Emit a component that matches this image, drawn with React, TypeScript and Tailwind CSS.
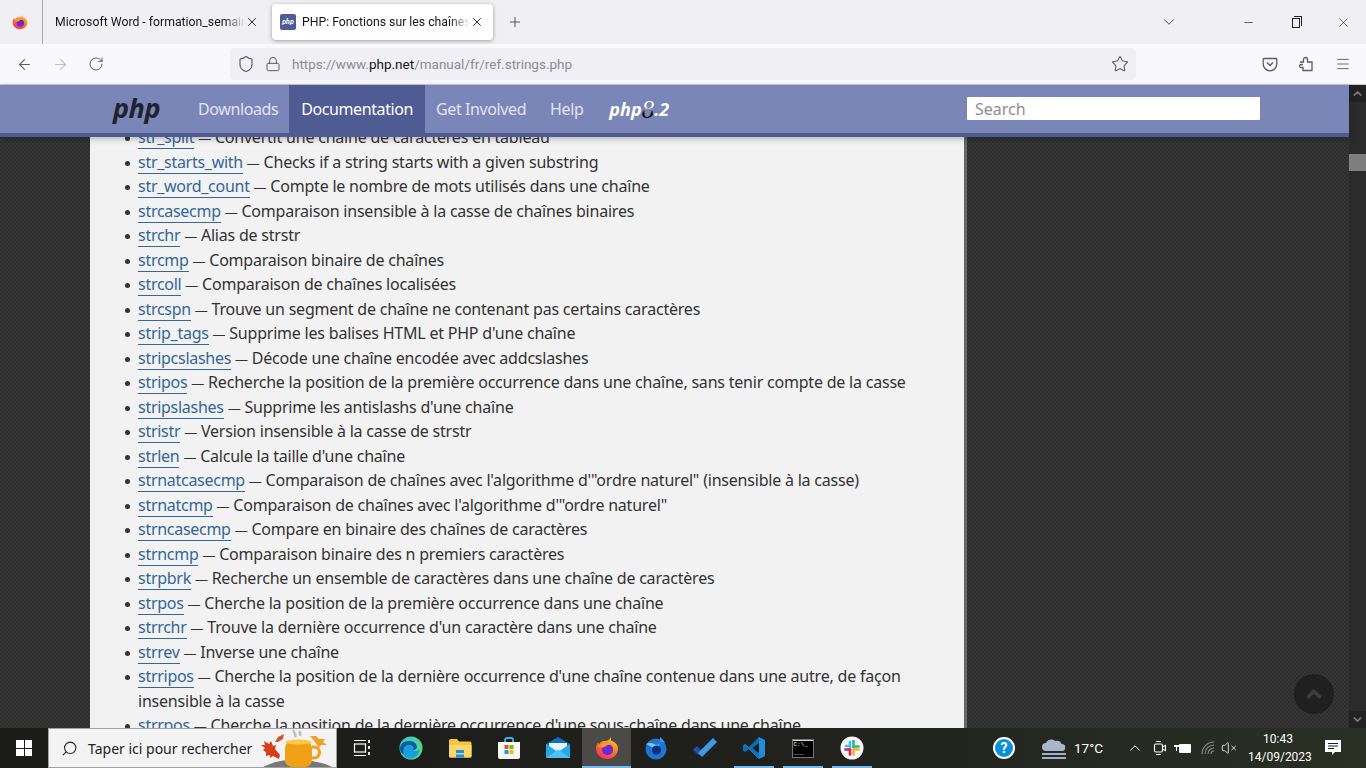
import { ArrowLeft, ArrowRight, RotateCw, Shield, Lock, Star, Menu, X, Plus, ChevronDown, ChevronUp, Minus, Search, VolumeX } from 'lucide-react';

const items: { name: string; text: string }[] = [
  { name: 'str_split', text: 'Convertit une chaîne de caractères en tableau' },
  { name: 'str_starts_with', text: 'Checks if a string starts with a given substring' },
  { name: 'str_word_count', text: 'Compte le nombre de mots utilisés dans une chaîne' },
  { name: 'strcasecmp', text: 'Comparaison insensible à la casse de chaînes binaires' },
  { name: 'strchr', text: 'Alias de strstr' },
  { name: 'strcmp', text: 'Comparaison binaire de chaînes' },
  { name: 'strcoll', text: 'Comparaison de chaînes localisées' },
  { name: 'strcspn', text: 'Trouve un segment de chaîne ne contenant pas certains caractères' },
  { name: 'strip_tags', text: "Supprime les balises HTML et PHP d'une chaîne" },
  { name: 'stripcslashes', text: 'Décode une chaîne encodée avec addcslashes' },
  { name: 'stripos', text: 'Recherche la position de la première occurrence dans une chaîne, sans tenir compte de la casse' },
  { name: 'stripslashes', text: "Supprime les antislashs d'une chaîne" },
  { name: 'stristr', text: 'Version insensible à la casse de strstr' },
  { name: 'strlen', text: "Calcule la taille d'une chaîne" },
  { name: 'strnatcasecmp', text: `Comparaison de chaînes avec l'algorithme d'"ordre naturel" (insensible à la casse)` },
  { name: 'strnatcmp', text: `Comparaison de chaînes avec l'algorithme d'"ordre naturel"` },
  { name: 'strncasecmp', text: 'Compare en binaire des chaînes de caractères' },
  { name: 'strncmp', text: 'Comparaison binaire des n premiers caractères' },
  { name: 'strpbrk', text: 'Recherche un ensemble de caractères dans une chaîne de caractères' },
  { name: 'strpos', text: 'Cherche la position de la première occurrence dans une chaîne' },
  { name: 'strrchr', text: "Trouve la dernière occurrence d'un caractère dans une chaîne" },
  { name: 'strrev', text: 'Inverse une chaîne' },
  { name: 'strripos', text: "Cherche la position de la dernière occurrence d'une chaîne contenue dans une autre, de façon insensible à la casse" },
  { name: 'strrpos', text: "Cherche la position de la dernière occurrence d'une sous-chaîne dans une chaîne" },
];

function FirefoxIcon({ id, size }: { id: string; size: number }) {
  return (
    <svg width={size} height={size} viewBox="0 0 24 24">
      <defs>
        <linearGradient id={id} x1="0.8" y1="0" x2="0.2" y2="1">
          <stop offset="0" stopColor="#ffd23c" />
          <stop offset="0.45" stopColor="#ff7a1f" />
          <stop offset="1" stopColor="#f5276b" />
        </linearGradient>
      </defs>
      <path d="M15.5 1c1 2 .6 3 .2 3.6C19.8 6 23 8.6 23 12.5 23 18.5 18 23 12 23 6 23 1 18.400 1 12.500 1 10 1.700 8 3 6.500c.3.900.7 1.400 1.300 1.800C5.200 6 7 5 8.500 5.100 10.500 5 15.500 4.500 15.500 1z" fill={`url(#${id})`} />
      <circle cx="12.500" cy="13.500" r="5.600" fill="#6a2bd0" />
      <path d="M3 11c2-3 6-5 9.500-4.500 3 .4 5 2 6 3.500-2-1-4-1.500-6-1-1 .3-1 1-2 1.500L8 11.500z" fill="#ff9a2a" />
    </svg>
  );
}

function ThunderbirdIcon() {
  return (
    <svg width="24" height="24" viewBox="0 0 24 24">
      <circle cx="12" cy="13" r="10.500" fill="#1b76d0" />
      <path d="M16 1c2 2 4 3 5 6-2-1-4-1-5-1z" fill="#2f9cf0" />
      <path d="M2 8c3-1.500 6-1 8 0 3 1.500 5 1 6-1-.5 3-3 5-6 4.500-2.500-.4-5-2-8-3.500z" fill="#7cc8f8" />
      <circle cx="12.500" cy="14" r="4.500" fill="#172c7a" />
    </svg>
  );
}

function EdgeIcon() {
  return (
    <svg width="24" height="24" viewBox="0 0 24 24">
      <defs>
        <linearGradient id="edgeA" x1="0" y1="0" x2="1" y2="1">
          <stop offset="0" stopColor="#37c6d0" />
          <stop offset="1" stopColor="#5fdc6a" />
        </linearGradient>
      </defs>
      <circle cx="12" cy="12" r="11.500" fill="url(#edgeA)" />
      <path d="M1 13C1 7 6 5 10 5c5 0 8 3 8 6 0 2-2 3-4 3-1 0 1-1 0-3-1-2-4-3-7-1-3 2-3 6-1 9-3-1-5-3-5-6z" fill="#0c59a4" />
      <path d="M7 10c3-2 6-1 7 1 1 2-1 3 0 3.500 2 1 5 0 7-1-1 5-5 9-10 9-3 0-6-2-6.500-5-.3-3 .5-6 2.500-7.500z" fill="#1b9de2" />
    </svg>
  );
}

function ExplorerIcon() {
  return (
    <svg width="24" height="22" viewBox="0 0 24 22">
      <path d="M1 3.500A1.500 1.500 0 0 1 2.500 2H9l2 2.500h11A1.500 1.500 0 0 1 23.500 6v13A1.500 1.500 0 0 1 22 20.500H2.500A1.500 1.500 0 0 1 1 19z" fill="#f6c343" />
      <path d="M1 8h22.500v11a1.500 1.500 0 0 1-1.500 1.500H2.500A1.500 1.500 0 0 1 1 19z" fill="#fbd768" />
      <rect x="8" y="13" width="8" height="7.500" fill="#2d8bd6" />
      <rect x="8" y="16" width="8" height="1.500" fill="#b9dcf5" />
    </svg>
  );
}

function StoreIcon() {
  return (
    <svg width="24" height="24" viewBox="0 0 24 24">
      <path d="M8 6V4a2 2 0 0 1 2-2h4a2 2 0 0 1 2 2v2" fill="none" stroke="#3cb4ea" strokeWidth="1.800" />
      <path d="M1 6h22v15a2 2 0 0 1-2 2H3a2 2 0 0 1-2-2z" fill="#f6f6f6" />
      <rect x="7.500" y="9" width="4" height="4" fill="#f25022" />
      <rect x="12.500" y="9" width="4" height="4" fill="#7fba00" />
      <rect x="7.500" y="14" width="4" height="4" fill="#00a4ef" />
      <rect x="12.500" y="14" width="4" height="4" fill="#ffb900" />
    </svg>
  );
}

function MailIcon() {
  return (
    <svg width="24" height="24" viewBox="0 0 24 24">
      <path d="M0 8 12 1l12 7v13H0z" fill="#0f6fbf" />
      <path d="M3 7h18v9H3z" fill="#e9f4fb" />
      <path d="M0 8l12 8 12-8v14H0z" fill="#27a8ea" />
      <path d="M0 22 12 13.500 24 22z" fill="#4cc2f3" />
    </svg>
  );
}

function TodoIcon() {
  return (
    <svg width="26" height="22" viewBox="0 0 26 22">
      <path d="M1 13l4-4 5 5-4 4z" fill="#1d50a8" />
      <path d="M6 18 21 3l4 4L10 22z" transform="translate(0 -2)" fill="#3a9bec" />
    </svg>
  );
}

function VsCodeIcon() {
  return (
    <svg width="24" height="24" viewBox="0 0 24 24">
      <path d="M17 1l6 3v16l-6 3-10-10z" fill="#1f8ed8" />
      <path d="M17 1v22L7 13l-4 3-2-1.500V9.500L3 8l4 3z" fill="#0b6db4" />
      <path d="M17 7v10l-6.500-5z" fill="#1c1c1a" />
      <path d="M1 9.500 3 8l14 11v4l-10-10z" fill="#0f78c2" />
    </svg>
  );
}

function TerminalIcon() {
  return (
    <div className="w-[22px] h-[19px] bg-black border border-[#777] flex flex-col">
      <div className="h-[2px] bg-[#d8d8d8]" />
      <div className="pl-[1px] text-white font-['Liberation_Mono',monospace] text-[6px] leading-[8px]">C:\_ ___</div>
    </div>
  );
}

function SlackIcon() {
  return (
    <svg width="24" height="24" viewBox="0 0 24 24">
      <circle cx="12" cy="12" r="11.500" fill="#f7f7f7" />
      <g strokeWidth="2.600" strokeLinecap="round" fill="none">
        <path d="M10 6v5" stroke="#36c5f0" />
        <path d="M6 10h2" stroke="#36c5f0" />
        <path d="M13.500 5v6" stroke="#2eb67d" />
        <path d="M13.500 10.500h5" stroke="#2eb67d" />
        <path d="M13.500 13.500v5" stroke="#ecb22e" />
        <path d="M14 13.500h4.500" stroke="#ecb22e" />
        <path d="M10 13.500v5" stroke="#e01e5a" />
        <path d="M5.500 13.500H10" stroke="#e01e5a" />
      </g>
    </svg>
  );
}

function TaskIcon({ children, mark, active }: { children: React.ReactNode; mark?: boolean; active?: boolean }) {
  return (
    <div className={`relative w-[49px] h-full flex items-center justify-center ${active ? 'bg-[#4b4a46]' : ''}`}>
      {children}
      {mark && <div className={`absolute bottom-0 h-[2px] bg-[#76b9ed] ${active ? 'left-0 right-0' : 'left-[5px] right-[4px]'}`} />}
    </div>
  );
}

function MugArt() {
  return (
    <svg width="76" height="40" viewBox="0 0 76 40" className="absolute right-0 top-0">
      <path d="M0 40c10-7 26-10 40-9 14 .6 26 3 36 9z" fill="#77767a" />
      <path d="M1 16l4 0-1-4 5 3 2-3 2 5 3-1-1 4 5 6-1 4-6-3-3 2 0-3-4 1 0-4-3-2 2-2z" fill="#d63d18" />
      <path d="M15 13l3-5 6-3-1 5-5 3z" fill="#c9592a" />
      <path d="M50 7l6 0 3 3 6 0-2 3 4 3-6 0-2 3-4-6z" fill="#eea21f" />
      <rect x="25" y="12" width="27" height="26" rx="7" fill="#f0a015" />
      <ellipse cx="38.500" cy="13" rx="13" ry="2.500" fill="#ffc848" />
      <path d="M52 18h2a5 5 0 0 1 0 11h-3" fill="none" stroke="#f0a015" strokeWidth="3" />
      <path d="M34 1c-2 3 3 3 1 7M40 2c-1 2 1 3 0 5" fill="none" stroke="#bdbdbd" strokeWidth="2.500" />
    </svg>
  );
}

export default function App() {
  return (
    <div className="w-[1366px] h-[768px] overflow-hidden flex flex-col bg-[#333] font-['Roboto',sans-serif]">
      {/* Tab bar */}
      <div className="h-[44px] flex items-center bg-[#f0f0f4] text-[#15141a] text-[12.25px]">
        <div className="w-[43px] h-full flex items-center justify-center border-r border-[#a8a8ac] pr-[3px]">
          <FirefoxIcon id="ffTab" size={16} />
        </div>
        <div className="w-[229px] h-full flex items-center pl-[12px] pr-[13px]">
          <span className="flex-1 mt-[1px] overflow-hidden whitespace-nowrap [mask-image:linear-gradient(to_left,transparent,black_20px)]">Microsoft Word - formation_semaine</span>
          <X size={14} strokeWidth={1.5} />
        </div>
        <div className="w-[221px] h-[36px] bg-white rounded-[4px] shadow-[0_1px_4px_rgba(0,0,0,0.35)] flex items-center pl-[8px] pr-[9px]">
          <div className="w-[16px] h-[16px] rounded-[2px] bg-[#4f5b93] text-white flex items-center justify-center italic font-bold text-[7px] mr-[6px]">php</div>
          <span className="flex-1 mt-[1px] overflow-hidden whitespace-nowrap [mask-image:linear-gradient(to_left,transparent,black_20px)]">PHP: Fonctions sur les chaînes de caractères</span>
          <X size={14} strokeWidth={1.5} />
        </div>
        <Plus size={16} strokeWidth={1.3} className="ml-[14px] text-[#444]" />
        <div className="flex-1" />
        <ChevronDown size={18} strokeWidth={1.2} className="text-[#444] mr-[64px]" />
        <Minus size={13} strokeWidth={1.3} className="text-[#222] mr-[37px]" />
        <div className="relative w-[10px] h-[12px] mr-[34px]">
          <div className="absolute left-0 bottom-0 w-[8px] h-[10px] border border-[#222] bg-[#f0f0f4]" />
          <div className="absolute right-0 top-0 w-[8px] h-[10px] border-t border-r border-[#222]" />
        </div>
        <X size={15} strokeWidth={1} className="text-[#222] mr-[15px]" />
      </div>

      {/* Toolbar */}
      <div className="h-[41px] bg-[#f9f9fb] border-b border-[#ccc] flex items-center text-[#5b5b66]">
        <ArrowLeft size={17} strokeWidth={1.5} className="ml-[16px]" />
        <ArrowRight size={17} strokeWidth={1.5} className="ml-[19px] text-[#bdbdc2]" />
        <RotateCw size={16} strokeWidth={1.5} className="ml-[19px]" />
        <div className="ml-[126px] w-[906px] h-[32px] rounded-[4px] bg-[#f0f0f4] flex items-center pl-[7px] pr-[7px]">
          <Shield size={18} strokeWidth={1.5} />
          <Lock size={16} strokeWidth={1.5} className="ml-[10px]" />
          <span className="ml-[11px] mt-[1px] text-[13.5px] text-[#8b8b92] whitespace-nowrap">
            https://www.<span className="text-[#15141a]">php.net</span>/manual/fr/ref.strings.php
          </span>
          <div className="flex-1" />
          <Star size={18} strokeWidth={1.4} />
        </div>
        <svg width="16" height="16" viewBox="0 0 16 16" className="ml-[126px]" fill="none" stroke="currentColor" strokeWidth="1.300">
          <path d="M2 2.500h12a.8.8 0 0 1 .8.8V8a6.800 6.800 0 0 1-13.600 0V3.300a.8.8 0 0 1 .8-.8z" />
          <path d="M5 6.500l3 3 3-3" />
        </svg>
        <svg width="16" height="16" viewBox="0 0 16 16" className="ml-[20px]" fill="none" stroke="currentColor" strokeWidth="1.300">
          <path d="M2 6h3.500V3.500a2 2 0 0 1 4 0V6H14v8.500H5V11.500H3a1.500 1.500 0 0 1 0-3h2" />
        </svg>
        <Menu size={16} strokeWidth={1.4} className="ml-[21px]" />
      </div>

      {/* Browser viewport */}
      <div className="h-[643px] flex">
        <div className="relative w-[1349px] flex flex-col">
          <nav className="relative z-10 h-[52px] bg-[#7a86b8] border-b-[4px] border-[#4f5b93] shadow-[0_2px_6px_rgba(0,0,0,0.25)] flex font-['Noto_Sans',sans-serif] text-[16px] tracking-[-0.4px] text-[#e2e4ef]">
            <div className="ml-[113px] w-[73px] flex items-center">
              <span className="text-[27px] leading-none font-bold italic text-[#1f2330] tracking-[-0.5px] font-['Open_Sans',sans-serif] -mt-[3px]">php</span>
            </div>
            <div className="pl-[12px] pr-[11px] flex items-center">Downloads</div>
            <div className="px-[12px] flex items-center bg-[#4f5b93] text-white">Documentation</div>
            <div className="pl-[11px] pr-[12px] flex items-center">Get Involved</div>
            <div className="px-[12px] flex items-center">Help</div>
            <div className="ml-[14px] flex items-center text-[18px] font-bold italic text-white tracking-normal">
              php<span className="font-['Liberation_Serif',serif] font-normal text-[25px] leading-none bg-gradient-to-b from-white from-40% to-black to-70% text-transparent bg-clip-text">8</span>.2
            </div>
            <div className="absolute left-[967px] top-[12px] w-[293px] h-[23px] bg-white rounded-[1px] pl-[8px] flex items-center text-[#8d8d8d] tracking-normal">Search</div>
          </nav>
          <main className="flex-1 min-h-0 overflow-hidden bg-[#333] bg-[repeating-conic-gradient(#363636_0_25%,#2e2e2e_0_50%)] bg-[length:4px_4px]">
            <div className="ml-[90px] w-[877px] h-full overflow-hidden bg-[#f2f2f2] border-r-[3px] border-[#666]">
              <ul className="-mt-[12px] pl-[48px] pr-[50px] text-[16px] leading-[24.5px] text-[#333] font-['Noto_Sans',sans-serif] tracking-[-0.21px]">
                {items.map((it) => (
                  <li key={it.name} className="relative">
                    <span className="absolute left-[-13px] top-[11px] w-[5px] h-[5px] rounded-full bg-[#333]" />
                    <a className="text-[#369] border-b border-[#369] tracking-[-0.28px]">{it.name}</a>
                    {' '}<span className="text-[13px] leading-none">—</span>{' '}
                    {it.text}
                  </li>
                ))}
              </ul>
            </div>
          </main>
          <div className="absolute left-[1294px] top-[589px] w-[40px] h-[40px] rounded-full bg-[#202020] flex items-center justify-center text-[#3d3d3d]">
            <ChevronUp size={22} strokeWidth={4} />
          </div>
        </div>
        <div className="w-[17px] bg-[#2b2b2b] flex flex-col items-center text-[#777]">
          <div className="h-[17px] w-full bg-[#222] flex items-center justify-center"><ChevronUp size={13} strokeWidth={3} /></div>
          <div className="mt-[52px] h-[17px] w-full bg-[#7f7f7f]" />
          <div className="flex-1" />
          <div className="h-[17px] w-full bg-[#222] flex items-center justify-center"><ChevronDown size={13} strokeWidth={3} /></div>
        </div>
      </div>

      {/* Windows taskbar */}
      <div className="h-[40px] flex items-center bg-gradient-to-r from-[#1b1b1a] via-[#1f1f1c] to-[#2a3024] text-white">
        <div className="w-[48px] flex justify-center">
          <div className="grid grid-cols-2 gap-[1px] w-[16px] h-[16px]">
            <div className="bg-white" /><div className="bg-white" /><div className="bg-white" /><div className="bg-white" />
          </div>
        </div>
        <div className="relative w-[289px] h-full bg-[#f3f3f3] border border-[#a0a0a0] flex items-center pl-[12px] text-[#222] overflow-hidden">
          <Search size={17} strokeWidth={1.5} className="-scale-x-100" />
          <span className="ml-[10px] text-[14px] font-['Noto_Sans',sans-serif]">Taper ici pour rechercher</span>
          <MugArt />
        </div>
        <div className="h-full flex">
          <TaskIcon>
            <svg width="18" height="18" viewBox="0 0 18 18" fill="none" stroke="white" strokeWidth="1.200">
              <path d="M1 1.500h12M1 16.500h12" />
              <rect x="1.500" y="5" width="11" height="8" />
              <path d="M16 1v3M16 7v3M16 13v3" strokeWidth="1.800" />
            </svg>
          </TaskIcon>
          <TaskIcon><EdgeIcon /></TaskIcon>
          <TaskIcon><ExplorerIcon /></TaskIcon>
          <TaskIcon><StoreIcon /></TaskIcon>
          <TaskIcon><MailIcon /></TaskIcon>
          <TaskIcon mark active><FirefoxIcon id="ffBar" size={24} /></TaskIcon>
          <TaskIcon><ThunderbirdIcon /></TaskIcon>
          <TaskIcon><TodoIcon /></TaskIcon>
          <TaskIcon mark><VsCodeIcon /></TaskIcon>
          <TaskIcon mark><TerminalIcon /></TaskIcon>
          <TaskIcon mark><SlackIcon /></TaskIcon>
        </div>
        <div className="flex-1" />
        <div className="w-[22px] h-[22px] rounded-full bg-[#0a8fd8] border-[2px] border-white flex items-center justify-center text-[14px] font-bold mr-[26px]">?</div>
        <svg width="26" height="24" viewBox="0 0 26 24" className="mr-[7px]">
          <path d="M5 15a4 4 0 0 1 0-8c1-3 6-5 9-2 3-1 6 0 6.500 3a3.500 3.500 0 0 1 .5 7z" fill="#a8b6c8" />
          <path d="M1 18h24M1 22h24" stroke="#9fb2c6" strokeWidth="2" />
        </svg>
        <span className="text-[13.5px] mr-[23px]">17°C</span>
        <ChevronUp size={18} strokeWidth={1.3} className="mr-[9px]" />
        <svg width="14" height="18" viewBox="0 0 14 18" fill="none" stroke="white" strokeWidth="1.100" className="mr-[7px]">
          <rect x="1.500" y="5" width="8" height="8" rx="1.500" />
          <path d="M9.500 8l3-1.500v5l-3-1.500M3 2.500h5M3 15.500h5" />
        </svg>
        <svg width="17" height="14" viewBox="0 0 17 14" fill="white" className="mr-[10px]">
          <rect x="5" y="3" width="12" height="9" rx="1" />
          <path d="M1 1v3M4 1v3M0 4h5v2H3v4H2V6H0z" />
        </svg>
        <svg width="14" height="14" viewBox="0 0 14 14" fill="none" stroke="#8e8e8e" strokeWidth="1.100" className="mr-[6px]">
          <path d="M1 13a12 12 0 0 1 12-12M4 13a9 9 0 0 1 9-9M7 13a6 6 0 0 1 6-6M10 13a3 3 0 0 1 3-3" />
        </svg>
        <VolumeX size={16} strokeWidth={1.2} className="mr-[11px]" />
        <div className="w-[60px] text-center text-[12px] leading-[18px] mr-[16px]">
          <div>10:43</div>
          <div className="whitespace-nowrap">14/09/2023</div>
        </div>
        <svg width="18" height="18" viewBox="0 0 18 18" className="mr-[24px]">
          <path d="M1 1h16v12h-6l-3 3v-3H1z" fill="white" />
          <path d="M4 4.500h10M4 7h10M4 9.500h6" stroke="#222" strokeWidth="1" />
        </svg>
      </div>
    </div>
  );
}
